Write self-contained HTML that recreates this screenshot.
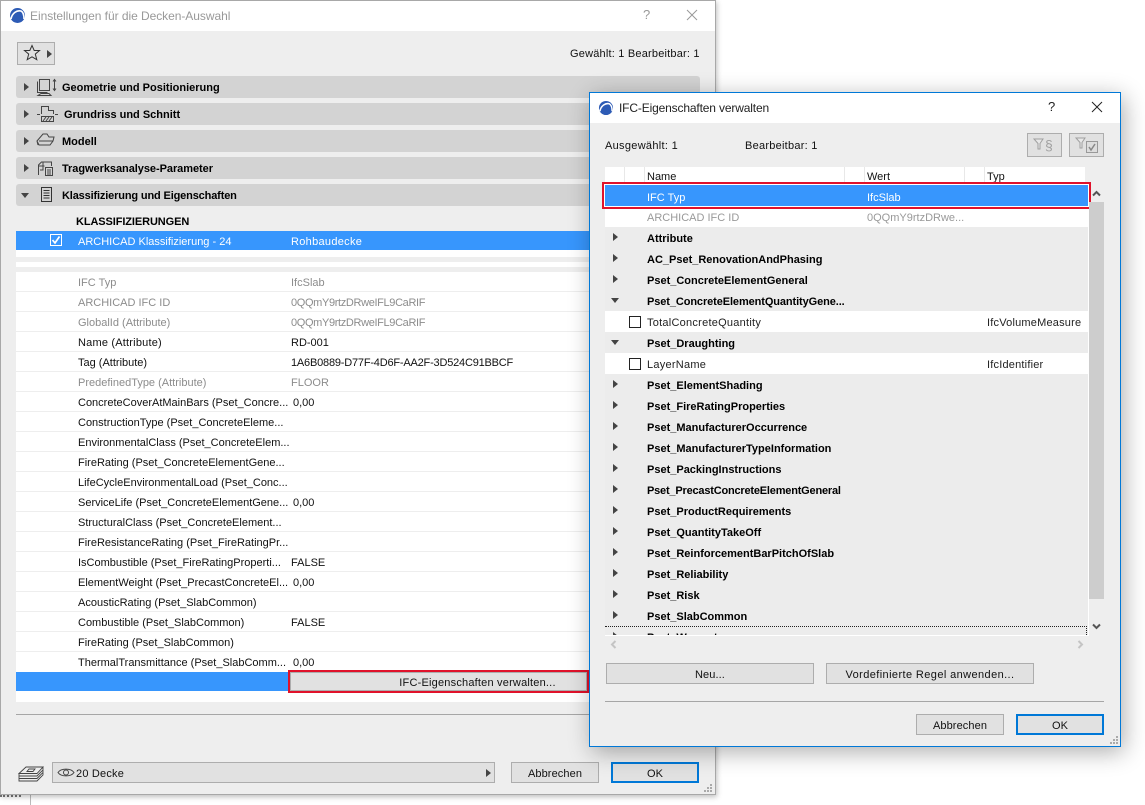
<!DOCTYPE html>
<html><head><meta charset="utf-8"><style>
html,body{margin:0;padding:0;width:1145px;height:805px;overflow:hidden;background:#fff}
body{position:relative;font:11px/14px "Liberation Sans",sans-serif;color:#111}
div,svg,span,i{box-sizing:border-box}
.a,.t,svg{position:absolute}
.t{white-space:nowrap;line-height:14px}
.b{font-weight:bold;color:#000}
.w{position:absolute;background:#eee}
.sec{position:absolute;left:16px;width:684px;height:22px;background:#d3d3d3;border-radius:3px}
.tr{position:absolute;width:0;height:0;border-style:solid;border-color:transparent;border-width:4px 0 4px 5px;border-left-color:#444}
.td{position:absolute;width:0;height:0;border-style:solid;border-color:transparent;border-width:5px 4.5px 0 4.5px;border-top-color:#444}
.btn{position:absolute;background:#e1e1e1;border:1px solid #adadad;text-align:center;height:21px;line-height:22px;white-space:nowrap;letter-spacing:.1px}
.ok{border:2px solid #0078d7;line-height:20px}
.r{height:20px;border-bottom:1px solid #eee;position:relative}
.r span{position:absolute;top:4px;white-space:nowrap}
.n{left:62px}.v{left:275px}.g{color:#8c8c8c}
.q{height:21px;background:#ececec;position:relative}
.q .tr{left:8px;top:6px}.q .td{left:6px;top:8px}
.q span{position:absolute;left:42px;top:5px;font-weight:bold;color:#000;white-space:nowrap}
.q.l{background:#fff}.q.l span{font-weight:normal;color:#222;letter-spacing:.25px}
.q.l i{position:absolute;left:24px;top:5px;width:12px;height:12px;border:1px solid #222;background:#fff}
.q.l em{position:absolute;left:382px;top:5px;font-style:normal;color:#222;white-space:nowrap;letter-spacing:.2px}
.h{position:absolute;top:167px;width:1px;height:18px;background:#e8e8e8}
</style></head><body>

<!-- background bits -->
<div class="a" style="left:30px;top:795px;width:1px;height:10px;background:#bbb"></div>
<div class="a" style="left:0;top:795px;width:21px;height:2px;border-top:2px dotted #777"></div>

<!-- LEFT WINDOW -->
<div class="w" style="left:0;top:0;width:716px;height:795px;border:1px solid #a8a8a8;border-left-width:1px;box-shadow:1px 2px 5px rgba(0,0,0,.25)"></div>
<div class="a" style="left:1px;top:1px;width:714px;height:30px;background:#fff"></div>
<svg style="left:9px;top:7px" width="17" height="17" viewBox="0 0 17 17"><circle cx="8.5" cy="8.5" r="7.5" fill="#2d5bb5"/><path d="M2 12C3 6 8 3 12 4c2 1 3 4 3 8" fill="none" stroke="#fff" stroke-width="1.6"/></svg>
<div class="t" style="left:30px;top:9px;font-size:12px;color:#999;letter-spacing:-.05px">Einstellungen für die Decken-Auswahl</div>
<div class="t" style="left:643px;top:8px;font-size:13px;color:#999">?</div>
<svg style="left:686px;top:9px" width="12" height="12"><path d="M1 1L11 11M11 1L1 11" stroke="#999" fill="none"/></svg>

<div class="a" style="left:17px;top:42px;width:38px;height:23px;background:#e1e1e1;border:1px solid #adadad"></div>
<svg style="left:23px;top:44px" width="18" height="18" viewBox="0 0 18 18"><path d="M9 1.5l2.200 5h5.300l-4.200 3.600 1.500 5.600L9 12.800l-4.800 2.900 1.500-5.600L1.500 6.500h5.300z" fill="none" stroke="#333"/></svg>
<div class="tr" style="left:47px;top:50px"></div>
<div class="t" style="left:570px;top:47px;letter-spacing:.2px">Gewählt: 1 Bearbeitbar: 1</div>

<div class="sec" style="top:76px"></div>
<div class="sec" style="top:103px"></div>
<div class="sec" style="top:130px"></div>
<div class="sec" style="top:157px"></div>
<div class="sec" style="top:184px"></div>
<div class="tr" style="left:24px;top:83px"></div>
<div class="tr" style="left:24px;top:110px"></div>
<div class="tr" style="left:24px;top:137px"></div>
<div class="tr" style="left:24px;top:164px"></div>
<div class="td" style="left:21px;top:193px"></div>
<div class="t b" style="left:62px;top:81px">Geometrie und Positionierung</div>
<div class="t b" style="left:64px;top:108px">Grundriss und Schnitt</div>
<div class="t b" style="left:62px;top:135px">Modell</div>
<div class="t b" style="left:62px;top:162px;letter-spacing:-.05px">Tragwerksanalyse-Parameter</div>
<div class="t b" style="left:62px;top:189px;letter-spacing:-.15px">Klassifizierung und Eigenschaften</div>

<svg style="left:36px;top:78px" width="22" height="18" viewBox="0 0 22 18" fill="none" stroke="#444"><path d="M3.500 1.500h10v11h-10zM1.500 3.500v11h10M5 15.500h8l2 2H2z"/><path d="M18.500 2v10M17 3.500l1.500-2 1.500 2M17 10.500l1.500 2 1.500-2"/></svg>
<svg style="left:37px;top:105px" width="21" height="18" viewBox="0 0 21 18" fill="none" stroke="#444"><path d="M4.500 9V1.500h7v4h5V9M0 9.500h3M18 9.500h3M4.500 11.500h12v5h-12zM6 16l3-4M9 16l3-4M12 16l3-4"/></svg>
<svg style="left:36px;top:132px" width="20" height="17" viewBox="0 0 20 17" fill="none" stroke="#444"><path d="M1 9l6-7h4l2 3h5l-1 4-3 4H3zM1 9l1 4M3 9h14"/></svg>
<svg style="left:37px;top:159px" width="18" height="18" viewBox="0 0 18 18" fill="none" stroke="#444"><path d="M1.500 16V6l3-3h10v4M1.500 7h6M6 3v8H3M8.500 8.500h7v8h-7zM10 11h4M10 13h4M10 15h4"/></svg>
<svg style="left:40px;top:186px" width="13" height="17" viewBox="0 0 13 17" fill="none" stroke="#333"><path d="M1.500 1.500h10v14h-10zM3.500 4.500h6M3.500 7h6M3.500 9.500h6M3.500 12h6"/></svg>

<div class="t b" style="left:76px;top:215px;letter-spacing:-.1px">KLASSIFIZIERUNGEN</div>
<div class="a" style="left:16px;top:231px;width:684px;height:19px;background:#3796fd"></div>
<div class="a" style="left:50px;top:234px;width:12px;height:12px;border:1px solid #fff"></div>
<svg style="left:51px;top:235px" width="10" height="10"><path d="M1.500 5l2.500 3L8.500 1.500" stroke="#fff" stroke-width="1.700" fill="none"/></svg>
<div class="t" style="left:78px;top:235px;color:#fff">ARCHICAD Klassifizierung - 24</div>
<div class="t" style="left:291px;top:235px;color:#fff;letter-spacing:.3px">Rohbaudecke</div>
<div class="a" style="left:16px;top:250px;width:684px;height:7px;background:#fff"></div>
<div class="a" style="left:16px;top:262px;width:684px;height:5px;background:#fff"></div>

<div class="a" style="left:16px;top:272px;width:684px;height:430px;background:#fff">
<div class="r"><span class="n g">IFC Typ</span><span class="v g">IfcSlab</span></div>
<div class="r"><span class="n g">ARCHICAD IFC ID</span><span class="v g" style="letter-spacing:-.35px">0QQmY9rtzDRweIFL9CaRIF</span></div>
<div class="r"><span class="n g">GlobalId (Attribute)</span><span class="v g" style="letter-spacing:-.35px">0QQmY9rtzDRweIFL9CaRIF</span></div>
<div class="r"><span class="n" style="letter-spacing:.2px">Name (Attribute)</span><span class="v">RD-001</span></div>
<div class="r"><span class="n">Tag (Attribute)</span><span class="v" style="letter-spacing:-.2px">1A6B0889-D77F-4D6F-AA2F-3D524C91BBCF</span></div>
<div class="r"><span class="n g">PredefinedType (Attribute)</span><span class="v g">FLOOR</span></div>
<div class="r"><span class="n">ConcreteCoverAtMainBars (Pset_Concre...</span><span class="v" style="left:277px">0,00</span></div>
<div class="r"><span class="n">ConstructionType (Pset_ConcreteEleme...</span></div>
<div class="r"><span class="n">EnvironmentalClass (Pset_ConcreteElem...</span></div>
<div class="r"><span class="n">FireRating (Pset_ConcreteElementGene...</span></div>
<div class="r"><span class="n">LifeCycleEnvironmentalLoad (Pset_Conc...</span></div>
<div class="r"><span class="n">ServiceLife (Pset_ConcreteElementGene...</span><span class="v" style="left:277px">0,00</span></div>
<div class="r"><span class="n">StructuralClass (Pset_ConcreteElement...</span></div>
<div class="r"><span class="n">FireResistanceRating (Pset_FireRatingPr...</span></div>
<div class="r"><span class="n">IsCombustible (Pset_FireRatingProperti...</span><span class="v">FALSE</span></div>
<div class="r"><span class="n">ElementWeight (Pset_PrecastConcreteEl...</span><span class="v" style="left:277px">0,00</span></div>
<div class="r"><span class="n">AcousticRating (Pset_SlabCommon)</span></div>
<div class="r"><span class="n">Combustible (Pset_SlabCommon)</span><span class="v">FALSE</span></div>
<div class="r"><span class="n">FireRating (Pset_SlabCommon)</span></div>
<div class="r" style="border:0"><span class="n">ThermalTransmittance (Pset_SlabComm...</span><span class="v" style="left:277px">0,00</span></div>
<div class="a" style="left:0;top:400px;width:684px;height:19px;background:#3796fd"></div>
</div>
<div class="a" style="left:288px;top:670px;width:301px;height:23px;border:2px solid #e0122b"></div>
<div class="btn" style="left:290px;top:672px;width:297px;height:19px;line-height:20px;padding-left:78px;letter-spacing:.2px">IFC-Eigenschaften verwalten...</div>

<div class="a" style="left:16px;top:714px;width:684px;height:1px;background:#a6a6a6"></div>
<svg style="left:18px;top:765px" width="26" height="17" viewBox="0 0 26 17" fill="none" stroke="#444" stroke-width=".9"><path d="M1 8.500L8 2h17l-6 6.500zM1 8.500v2.500h18l6-6V2M1 11v2.500h18l6-6V5M1 13.500V16h18l6-6V7.500M11 4h6l-2 2.500H9z"/></svg>
<div class="a" style="left:52px;top:762px;width:443px;height:21px;background:#e1e1e1;border:1px solid #adadad"></div>
<svg style="left:57px;top:767px" width="18" height="11" viewBox="0 0 18 11" fill="none" stroke="#444"><path d="M1 5.500C4 1 14 1 17 5.500 14 10 4 10 1 5.500z"/><circle cx="9" cy="5.500" r="2.500"/></svg>
<div class="t" style="left:76px;top:767px;letter-spacing:.2px">20 Decke</div>
<div class="tr" style="left:486px;top:769px"></div>
<div class="btn" style="left:511px;top:762px;width:88px">Abbrechen</div>
<div class="btn ok" style="left:611px;top:762px;width:88px">OK</div>
<svg style="left:703px;top:783px" width="10" height="10" fill="#aaa"><rect x="7" y="1" width="2" height="2"/><rect x="4" y="4" width="2" height="2"/><rect x="7" y="4" width="2" height="2"/><rect x="1" y="7" width="2" height="2"/><rect x="4" y="7" width="2" height="2"/><rect x="7" y="7" width="2" height="2"/></svg>

<!-- RIGHT DIALOG -->
<div class="w" style="left:589px;top:92px;width:532px;height:655px;border:1px solid #0078d7;box-shadow:3px 5px 22px rgba(0,0,0,.32)"></div>
<div class="a" style="left:590px;top:93px;width:530px;height:30px;background:#fff"></div>
<svg style="left:598px;top:100px" width="16" height="16" viewBox="0 0 17 17"><circle cx="8.500" cy="8.500" r="7.500" fill="#2d5bb5"/><path d="M2 12C3 6 8 3 12 4c2 1 3 4 3 8" fill="none" stroke="#fff" stroke-width="1.600"/></svg>
<div class="t" style="left:619px;top:101px;font-size:12px;color:#222;letter-spacing:-.15px">IFC-Eigenschaften verwalten</div>
<div class="t" style="left:1048px;top:100px;font-size:13px;color:#222">?</div>
<svg style="left:1091px;top:101px" width="12" height="12"><path d="M1 1L11 11M11 1L1 11" stroke="#222" fill="none"/></svg>

<div class="t" style="left:605px;top:139px;letter-spacing:.3px">Ausgewählt: 1</div>
<div class="t" style="left:745px;top:139px;letter-spacing:.25px">Bearbeitbar: 1</div>
<div class="a" style="left:1027px;top:133px;width:35px;height:24px;background:#e1e1e1;border:1px solid #adadad"></div>
<div class="a" style="left:1069px;top:133px;width:35px;height:24px;background:#e1e1e1;border:1px solid #adadad"></div>
<svg style="left:1033px;top:138px" width="12" height="13"><path d="M1 1h9L7 5.500V11H5V5.500z" fill="#e8e8e8" stroke="#a0a0a0"/></svg>
<div class="t" style="left:1045px;top:138px;font-size:14px;color:#a0a0a0">§</div>
<svg style="left:1075px;top:137px" width="12" height="13"><path d="M1 1h9L7 5.500V11H5V5.500z" fill="#e8e8e8" stroke="#a0a0a0"/></svg>
<svg style="left:1086px;top:141px" width="13" height="13"><rect x=".5" y=".5" width="11" height="11" fill="#ddd" stroke="#999"/><path d="M3 6l2 3 4-6" fill="none" stroke="#888" stroke-width="1.500"/></svg>

<div class="a" style="left:605px;top:167px;width:480px;height:18px;background:#fff"></div>
<div class="h" style="left:624px"></div><div class="h" style="left:644px"></div>
<div class="h" style="left:844px"></div><div class="h" style="left:864px"></div>
<div class="h" style="left:964px"></div><div class="h" style="left:984px"></div>
<div class="t" style="left:647px;top:170px">Name</div>
<div class="t" style="left:867px;top:170px">Wert</div>
<div class="t" style="left:987px;top:170px">Typ</div>

<div class="a" style="left:605px;top:207px;width:483px;height:20px;background:#fff"></div>
<div class="t" style="left:647px;top:211px;color:#999">ARCHICAD IFC ID</div>
<div class="t" style="left:867px;top:211px;color:#999">0QQmY9rtzDRwe...</div>

<div class="a" style="left:605px;top:227px;width:483px;height:408px;overflow:hidden;background:#ececec">
<div class="q"><div class="tr"></div><span>Attribute</span></div>
<div class="q"><div class="tr"></div><span>AC_Pset_RenovationAndPhasing</span></div>
<div class="q"><div class="tr"></div><span>Pset_ConcreteElementGeneral</span></div>
<div class="q"><div class="td"></div><span style="letter-spacing:-.1px">Pset_ConcreteElementQuantityGene...</span></div>
<div class="q l"><i></i><span>TotalConcreteQuantity</span><em>IfcVolumeMeasure</em></div>
<div class="q"><div class="td"></div><span>Pset_Draughting</span></div>
<div class="q l"><i></i><span>LayerName</span><em>IfcIdentifier</em></div>
<div class="q"><div class="tr"></div><span>Pset_ElementShading</span></div>
<div class="q"><div class="tr"></div><span>Pset_FireRatingProperties</span></div>
<div class="q"><div class="tr"></div><span>Pset_ManufacturerOccurrence</span></div>
<div class="q"><div class="tr"></div><span>Pset_ManufacturerTypeInformation</span></div>
<div class="q"><div class="tr"></div><span>Pset_PackingInstructions</span></div>
<div class="q"><div class="tr"></div><span style="letter-spacing:-.2px">Pset_PrecastConcreteElementGeneral</span></div>
<div class="q"><div class="tr"></div><span>Pset_ProductRequirements</span></div>
<div class="q"><div class="tr"></div><span>Pset_QuantityTakeOff</span></div>
<div class="q"><div class="tr"></div><span>Pset_ReinforcementBarPitchOfSlab</span></div>
<div class="q"><div class="tr"></div><span>Pset_Reliability</span></div>
<div class="q"><div class="tr"></div><span>Pset_Risk</span></div>
<div class="q"><div class="tr"></div><span>Pset_SlabCommon</span></div>
<div class="q"><div class="tr"></div><span>Pset_Warranty</span></div>
<div class="a" style="left:0;top:399px;width:482px;height:9px;border-top:1px dotted #222;border-right:1px dotted #222"></div>
</div>
<div class="a" style="left:605px;top:635px;width:484px;height:1px;background:#fff"></div>
<div class="a" style="left:1088px;top:207px;width:1px;height:429px;background:#fff"></div>

<div class="a" style="left:602px;top:182px;width:489px;height:27px;border:1px solid #e0122b;background:#ffb8b8"></div>
<div class="a" style="left:603px;top:183px;width:487px;height:25px;border:1px solid #e0122b"></div>
<div class="a" style="left:605px;top:185px;width:483px;height:21px;background:#3796fd;outline:1px solid #fff"></div>
<div class="t" style="left:647px;top:191px;color:#fff">IFC Typ</div>
<div class="t" style="left:867px;top:191px;color:#fff">IfcSlab</div>

<svg style="left:1092px;top:190px" width="9" height="7"><path d="M1 5.500L4.500 2 8 5.500" fill="none" stroke="#555" stroke-width="2"/></svg>
<div class="a" style="left:1089px;top:202px;width:15px;height:397px;background:#cdcdcd"></div>
<svg style="left:1092px;top:623px" width="9" height="7"><path d="M1 1.500L4.500 5 8 1.500" fill="none" stroke="#555" stroke-width="2"/></svg>
<svg style="left:610px;top:640px" width="7" height="9"><path d="M5.500 1L2 4.500 5.500 8" fill="none" stroke="#c4c4c4" stroke-width="2"/></svg>
<svg style="left:1077px;top:640px" width="7" height="9"><path d="M1.500 1L5 4.500 1.500 8" fill="none" stroke="#c4c4c4" stroke-width="2"/></svg>

<div class="btn" style="left:606px;top:663px;width:208px">Neu...</div>
<div class="btn" style="left:826px;top:663px;width:208px;letter-spacing:.4px">Vordefinierte Regel anwenden...</div>
<div class="a" style="left:605px;top:701px;width:499px;height:1px;background:#a6a6a6"></div>
<div class="btn" style="left:916px;top:714px;width:88px">Abbrechen</div>
<div class="btn ok" style="left:1016px;top:714px;width:88px">OK</div>
<svg style="left:1109px;top:735px" width="10" height="10" fill="#aaa"><rect x="7" y="1" width="2" height="2"/><rect x="4" y="4" width="2" height="2"/><rect x="7" y="4" width="2" height="2"/><rect x="1" y="7" width="2" height="2"/><rect x="4" y="7" width="2" height="2"/><rect x="7" y="7" width="2" height="2"/></svg>
</body></html>
